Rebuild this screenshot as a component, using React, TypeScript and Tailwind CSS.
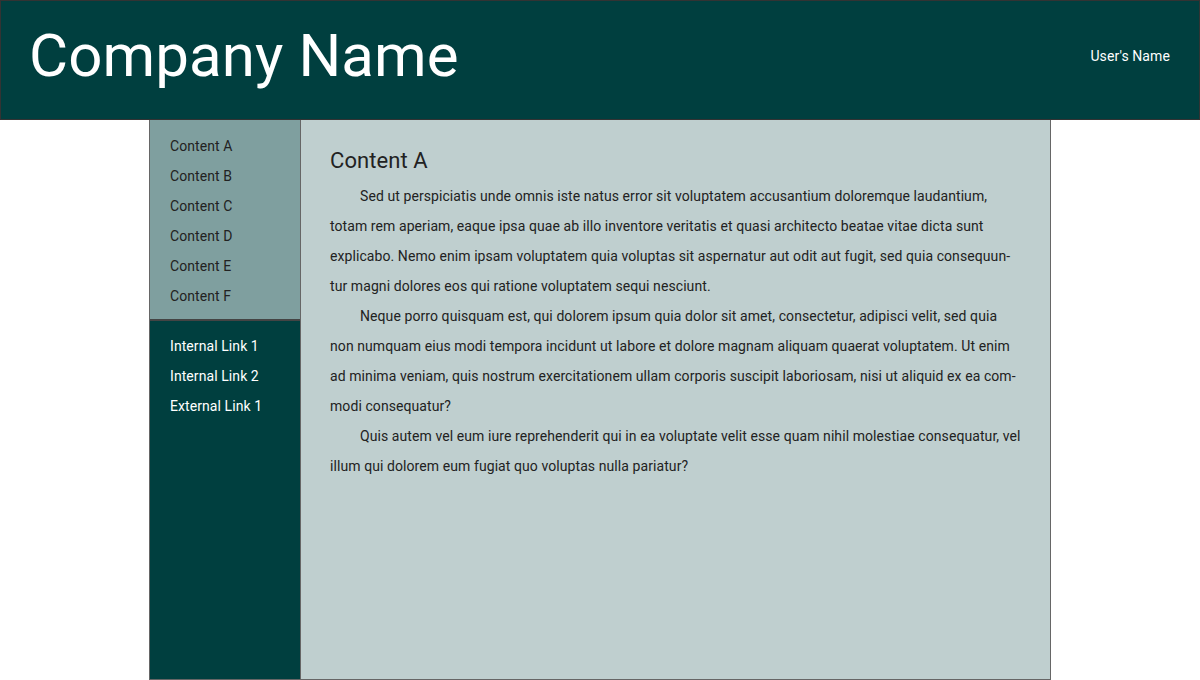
import React from "react";

const contents = ["Content A", "Content B", "Content C", "Content D", "Content E", "Content F"];
const links = ["Internal Link 1", "Internal Link 2", "External Link 1"];

const App = () => {
  return (
    <div className="flex h-[680px] flex-col bg-white font-['Roboto',sans-serif] text-[#222]">
      {/* Header */}
      <header className="flex h-[120px] shrink-0 items-center justify-between border border-[#333] bg-[#003f3f] pb-[9px] pl-[28px] pr-[29px] text-white">
        <h1 className="text-[60px] leading-none tracking-[0.1px]">Company Name</h1>
        <div className="pt-[2px] text-[14px] tracking-[0.1px]">User's Name</div>
      </header>

      {/* Body */}
      <div className="mx-auto flex w-[902px] flex-1 border border-t-0 border-[#666]">
        <nav className="flex w-[150px] shrink-0 flex-col bg-[#003f3f] text-[14px] leading-[30px] tracking-[0.08px]">
          <ul className="border-b-2 border-[#444] bg-[#7f9f9f] pb-[8px] pl-[20px] pt-[11px]">
            {contents.map((c) => (
              <li key={c}>{c}</li>
            ))}
          </ul>
          <ul className="pl-[20px] pt-[10px] text-white">
            {links.map((l) => (
              <li key={l}>{l}</li>
            ))}
          </ul>
        </nav>

        <main className="flex-1 border-l border-[#666] bg-[#bfcfcf] pl-[29px] pr-[29px] pt-[26px] text-[14px] leading-[30px] tracking-[0.08px]">
          <h2 className="mb-[5px] text-[22px] leading-[30px]">Content A</h2>
          <p className="indent-[30px]">
            Sed ut perspiciatis unde omnis iste natus error sit voluptatem accusantium doloremque laudantium, totam rem
            aperiam, eaque ipsa quae ab illo inventore veritatis et quasi architecto beatae vitae dicta sunt explicabo.
            Nemo enim ipsam voluptatem quia voluptas sit aspernatur aut odit aut fugit, sed quia consequun{"\u00AD"}tur
            magni dolores eos qui ratione voluptatem sequi nesciunt.
          </p>
          <p className="indent-[30px]">
            Neque porro quisquam est, qui dolorem ipsum quia dolor sit amet, consectetur, adipisci velit, sed quia non
            numquam eius modi tempora incidunt ut labore et dolore magnam aliquam quaerat voluptatem. Ut enim ad minima
            veniam, quis nostrum exercitationem ullam corporis suscipit laboriosam, nisi ut aliquid ex ea com{"\u00AD"}modi
            consequatur?
          </p>
          <p className="indent-[30px]">
            Quis autem vel eum iure reprehenderit qui in ea voluptate velit esse quam nihil molestiae consequatur, vel
            illum qui dolorem eum fugiat quo voluptas nulla pariatur?
          </p>
        </main>
      </div>
    </div>
  );
};

export default App;
